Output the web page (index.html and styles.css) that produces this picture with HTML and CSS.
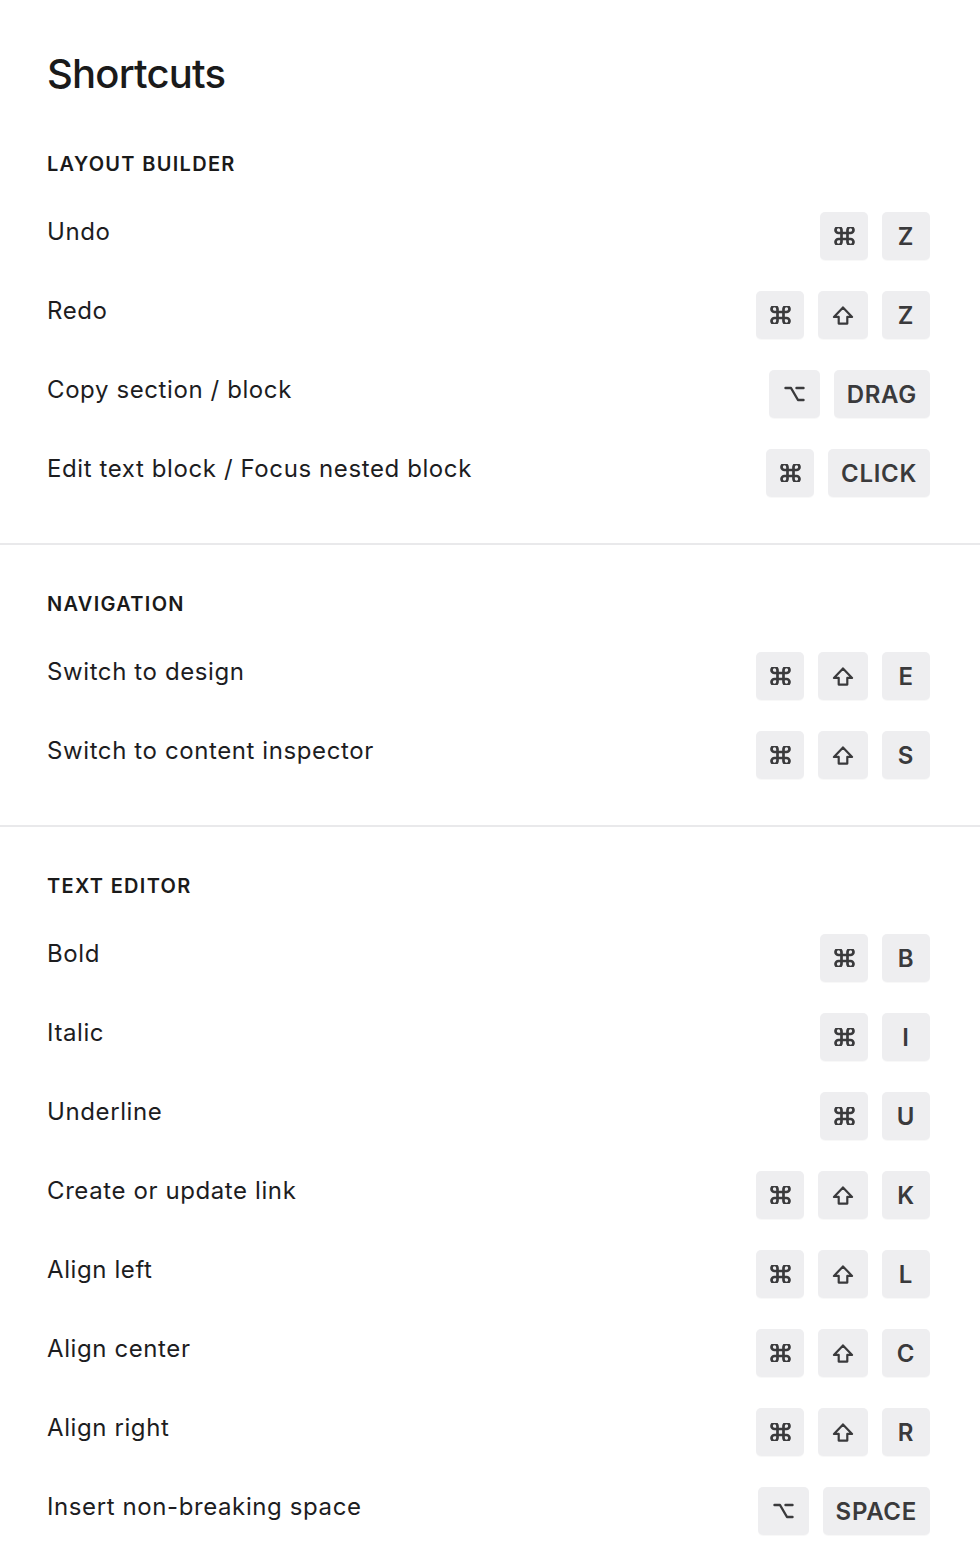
FILE: index.html
```html
<!DOCTYPE html>
<html lang="en">
<head>
<meta charset="utf-8">
<title>Shortcuts</title>
<link rel="stylesheet" href="styles.css">
</head>
<body>
<main class="page">
  <header class="page-header">
    <h1 class="title">Shortcuts</h1>
  </header>

  <section class="group">
    <h2 class="group-title">Layout builder</h2>
    <ul class="list">
      <li class="row"><span class="label">Undo</span><span class="keys">
        <kbd class="key"><svg class="ico ico-cmd" viewBox="3 3 18 18"><path d="M15 6v12a3 3 0 1 0 3-3H6a3 3 0 1 0 3 3V6a3 3 0 1 0-3 3h12a3 3 0 1 0-3-3"/></svg></kbd>
        <kbd class="key">Z</kbd></span></li>
      <li class="row"><span class="label">Redo</span><span class="keys">
        <kbd class="key"><svg class="ico ico-cmd" viewBox="3 3 18 18"><path d="M15 6v12a3 3 0 1 0 3-3H6a3 3 0 1 0 3 3V6a3 3 0 1 0-3 3h12a3 3 0 1 0-3-3"/></svg></kbd>
        <kbd class="key"><svg class="ico ico-shift" viewBox="0 0 24 22"><path d="M12 2.5 2.5 12.5H7.5V19.5H16.5V12.5H21.5Z"/></svg></kbd>
        <kbd class="key">Z</kbd></span></li>
      <li class="row"><span class="label">Copy section / block</span><span class="keys">
        <kbd class="key"><svg class="ico ico-opt" viewBox="0 0 24 20"><path d="M3 4H8.5L15.5 16H21M14 4H21"/></svg></kbd>
        <kbd class="key">DRAG</kbd></span></li>
      <li class="row"><span class="label">Edit text block / Focus nested block</span><span class="keys">
        <kbd class="key"><svg class="ico ico-cmd" viewBox="3 3 18 18"><path d="M15 6v12a3 3 0 1 0 3-3H6a3 3 0 1 0 3 3V6a3 3 0 1 0-3 3h12a3 3 0 1 0-3-3"/></svg></kbd>
        <kbd class="key">CLICK</kbd></span></li>
    </ul>
  </section>

  <section class="group">
    <h2 class="group-title">Navigation</h2>
    <ul class="list">
      <li class="row"><span class="label">Switch to design</span><span class="keys">
        <kbd class="key"><svg class="ico ico-cmd" viewBox="3 3 18 18"><path d="M15 6v12a3 3 0 1 0 3-3H6a3 3 0 1 0 3 3V6a3 3 0 1 0-3 3h12a3 3 0 1 0-3-3"/></svg></kbd>
        <kbd class="key"><svg class="ico ico-shift" viewBox="0 0 24 22"><path d="M12 2.5 2.5 12.5H7.5V19.5H16.5V12.5H21.5Z"/></svg></kbd>
        <kbd class="key">E</kbd></span></li>
      <li class="row"><span class="label">Switch to content inspector</span><span class="keys">
        <kbd class="key"><svg class="ico ico-cmd" viewBox="3 3 18 18"><path d="M15 6v12a3 3 0 1 0 3-3H6a3 3 0 1 0 3 3V6a3 3 0 1 0-3 3h12a3 3 0 1 0-3-3"/></svg></kbd>
        <kbd class="key"><svg class="ico ico-shift" viewBox="0 0 24 22"><path d="M12 2.5 2.5 12.5H7.5V19.5H16.5V12.5H21.5Z"/></svg></kbd>
        <kbd class="key">S</kbd></span></li>
    </ul>
  </section>

  <section class="group group-last">
    <h2 class="group-title">Text editor</h2>
    <ul class="list">
      <li class="row"><span class="label">Bold</span><span class="keys">
        <kbd class="key"><svg class="ico ico-cmd" viewBox="3 3 18 18"><path d="M15 6v12a3 3 0 1 0 3-3H6a3 3 0 1 0 3 3V6a3 3 0 1 0-3 3h12a3 3 0 1 0-3-3"/></svg></kbd>
        <kbd class="key">B</kbd></span></li>
      <li class="row"><span class="label">Italic</span><span class="keys">
        <kbd class="key"><svg class="ico ico-cmd" viewBox="3 3 18 18"><path d="M15 6v12a3 3 0 1 0 3-3H6a3 3 0 1 0 3 3V6a3 3 0 1 0-3 3h12a3 3 0 1 0-3-3"/></svg></kbd>
        <kbd class="key">I</kbd></span></li>
      <li class="row"><span class="label">Underline</span><span class="keys">
        <kbd class="key"><svg class="ico ico-cmd" viewBox="3 3 18 18"><path d="M15 6v12a3 3 0 1 0 3-3H6a3 3 0 1 0 3 3V6a3 3 0 1 0-3 3h12a3 3 0 1 0-3-3"/></svg></kbd>
        <kbd class="key">U</kbd></span></li>
      <li class="row"><span class="label">Create or update link</span><span class="keys">
        <kbd class="key"><svg class="ico ico-cmd" viewBox="3 3 18 18"><path d="M15 6v12a3 3 0 1 0 3-3H6a3 3 0 1 0 3 3V6a3 3 0 1 0-3 3h12a3 3 0 1 0-3-3"/></svg></kbd>
        <kbd class="key"><svg class="ico ico-shift" viewBox="0 0 24 22"><path d="M12 2.5 2.5 12.5H7.5V19.5H16.5V12.5H21.5Z"/></svg></kbd>
        <kbd class="key">K</kbd></span></li>
      <li class="row"><span class="label">Align left</span><span class="keys">
        <kbd class="key"><svg class="ico ico-cmd" viewBox="3 3 18 18"><path d="M15 6v12a3 3 0 1 0 3-3H6a3 3 0 1 0 3 3V6a3 3 0 1 0-3 3h12a3 3 0 1 0-3-3"/></svg></kbd>
        <kbd class="key"><svg class="ico ico-shift" viewBox="0 0 24 22"><path d="M12 2.5 2.5 12.5H7.5V19.5H16.5V12.5H21.5Z"/></svg></kbd>
        <kbd class="key">L</kbd></span></li>
      <li class="row"><span class="label">Align center</span><span class="keys">
        <kbd class="key"><svg class="ico ico-cmd" viewBox="3 3 18 18"><path d="M15 6v12a3 3 0 1 0 3-3H6a3 3 0 1 0 3 3V6a3 3 0 1 0-3 3h12a3 3 0 1 0-3-3"/></svg></kbd>
        <kbd class="key"><svg class="ico ico-shift" viewBox="0 0 24 22"><path d="M12 2.5 2.5 12.5H7.5V19.5H16.5V12.5H21.5Z"/></svg></kbd>
        <kbd class="key">C</kbd></span></li>
      <li class="row"><span class="label">Align right</span><span class="keys">
        <kbd class="key"><svg class="ico ico-cmd" viewBox="3 3 18 18"><path d="M15 6v12a3 3 0 1 0 3-3H6a3 3 0 1 0 3 3V6a3 3 0 1 0-3 3h12a3 3 0 1 0-3-3"/></svg></kbd>
        <kbd class="key"><svg class="ico ico-shift" viewBox="0 0 24 22"><path d="M12 2.5 2.5 12.5H7.5V19.5H16.5V12.5H21.5Z"/></svg></kbd>
        <kbd class="key">R</kbd></span></li>
      <li class="row"><span class="label">Insert non-breaking space</span><span class="keys">
        <kbd class="key"><svg class="ico ico-opt" viewBox="0 0 24 20"><path d="M3 4H8.5L15.5 16H21M14 4H21"/></svg></kbd>
        <kbd class="key">SPACE</kbd></span></li>
    </ul>
  </section>
</main>
</body>
</html>
```

FILE: styles.css
```css
* {
  box-sizing: border-box;
}

html, body {
  margin: 0;
  padding: 0;
  background: #ffffff;
}

body {
  font-family: Inter, "Liberation Sans", Arial, sans-serif;
  color: #1d1d1f;
}

.page {
  width: 980px;
}

.page-header {
  padding: 49px 50px 0 47px;
}

.title {
  margin: 0;
  font-size: 40px;
  line-height: 50px;
  font-weight: 500;
  letter-spacing: -0.8px;
  color: #1a1a1a;
}

.group {
  padding: 53px 50px 46px 47px;
  border-bottom: 2px solid #e9e9eb;
}

.group + .group {
  padding-top: 47px;
}

.group-last {
  border-bottom: none;
  padding-bottom: 28px;
}

.group-title {
  margin: 0 0 36px;
  font-size: 20px;
  line-height: 24px;
  font-weight: 600;
  text-transform: uppercase;
  letter-spacing: 1.3px;
  color: #1a1a1a;
}

.list {
  list-style: none;
  margin: 0;
  padding: 0;
  display: flex;
  flex-direction: column;
  gap: 31px;
}

.row {
  display: flex;
  justify-content: space-between;
  align-items: flex-start;
  height: 48px;
}

.label {
  font-size: 24px;
  line-height: 40px;
  font-weight: 400;
  letter-spacing: 0.6px;
  color: #1d1d1f;
}

.keys {
  display: flex;
  gap: 14px;
}

.key {
  display: inline-flex;
  align-items: center;
  justify-content: center;
  min-width: 48px;
  height: 48px;
  padding: 0 13px;
  border-radius: 5px;
  background: #eeeef0;
  box-shadow: 0 1px 1px rgba(0, 0, 0, 0.03);
  font-family: Inter, "Liberation Sans", Arial, sans-serif;
  font-size: 24px;
  font-weight: 600;
  letter-spacing: 0.7px;
  color: #3a3a3c;
}

.ico {
  fill: none;
  stroke: #3a3a3c;
  stroke-linecap: round;
  stroke-linejoin: round;
}

.ico-cmd {
  width: 21px;
  height: 18px;
  stroke-width: 2.7;
}

.ico-shift {
  width: 24px;
  height: 21px;
  stroke-width: 2.3;
}

.ico-opt {
  width: 25px;
  height: 20px;
  stroke-width: 2.4;
}
```
